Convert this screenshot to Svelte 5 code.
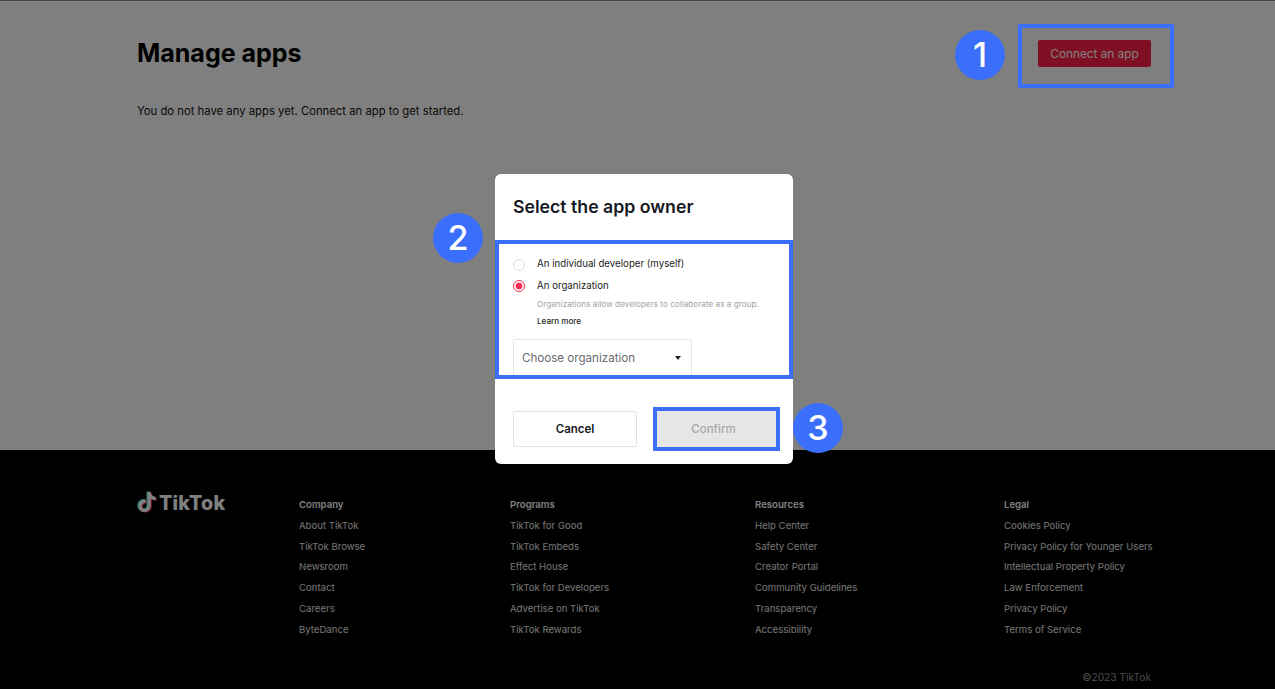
<script>
  const note = "M12.525.02c1.31-.02 2.61-.01 3.91-.02.08 1.53.63 3.09 1.75 4.17 1.12 1.11 2.7 1.62 4.24 1.79v4.03c-1.44-.05-2.89-.35-4.2-.97-.57-.26-1.1-.59-1.62-.93-.01 2.92.01 5.84-.02 8.75-.08 1.4-.54 2.79-1.35 3.94-1.31 1.92-3.58 3.17-5.91 3.21-1.43.08-2.86-.31-4.08-1.03-2.02-1.19-3.44-3.37-3.65-5.71-.02-.5-.03-1-.01-1.49.18-1.9 1.12-3.72 2.58-4.96 1.66-1.44 3.98-2.13 6.15-1.72.02 1.48-.04 2.96-.04 4.44-.99-.32-2.15-.23-3.02.37-.63.41-1.11 1.04-1.36 1.75-.21.51-.15 1.07-.14 1.61.24 1.64 1.82 3.02 3.5 2.87 1.12-.01 2.19-.66 2.77-1.61.19-.33.4-.67.41-1.06.1-1.79.06-3.57.07-5.36.01-4.03-.01-8.05.02-12.07z";

  const columns = [
    { title: "Company", links: ["About TikTok", "TikTok Browse", "Newsroom", "Contact", "Careers", "ByteDance"] },
    { title: "Programs", links: ["TikTok for Good", "TikTok Embeds", "Effect House", "TikTok for Developers", "Advertise on TikTok", "TikTok Rewards"] },
    { title: "Resources", links: ["Help Center", "Safety Center", "Creator Portal", "Community Guidelines", "Transparency", "Accessibility"] },
    { title: "Legal", links: ["Cookies Policy", "Privacy Policy for Younger Users", "Intellectual Property Policy", "Law Enforcement", "Privacy Policy", "Terms of Service"] }
  ];

  let owner = "org";
</script>

<div class="page">
  <main class="main">
    <header class="head">
      <h1>Manage apps</h1>
      <button class="connect">Connect an app</button>
    </header>
    <p class="empty">You do not have any apps yet. Connect an app to get started.</p>
  </main>

  <footer class="footer">
    <div class="cols">
      <div class="logo">
        <svg width="20" height="22" viewBox="0 0 24 24" aria-hidden="true">
          <path d={note} fill="#25f4ee" transform="translate(-1.2 -0.6)" />
          <path d={note} fill="#fe2c55" transform="translate(1.2 0.6)" />
          <path d={note} fill="#fff" />
        </svg>
        <span>TikTok</span>
      </div>
      {#each columns as col}
        <div class="col">
          <h4>{col.title}</h4>
          {#each col.links as link}
            <div class="link">{link}</div>
          {/each}
        </div>
      {/each}
    </div>
    <div class="copy">©2023 TikTok</div>
  </footer>

  <div class="scrim"></div>

  <div class="modal">
    <h2>Select the app owner</h2>
    <div class="body">
      <label class="radio">
        <input type="radio" bind:group={owner} value="me" />
        <span>An individual developer (myself)</span>
      </label>
      <label class="radio second">
        <input type="radio" bind:group={owner} value="org" />
        <span>An organization</span>
      </label>
      <div class="hint">Organizations allow developers to collaborate as a group.</div>
      <div class="more">Learn more</div>
      <div class="select">
        <span>Choose organization</span>
        <i class="caret"></i>
      </div>
    </div>
    <div class="actions">
      <button class="cancel">Cancel</button>
      <button class="confirm" disabled>Confirm</button>
    </div>
  </div>

  <div class="mark box1"></div>
  <div class="mark box2"></div>
  <div class="mark box3"></div>
  <div class="num n1">1</div>
  <div class="num n2">2</div>
  <div class="num n3">3</div>
</div>

<style>
  :global(body) {
    margin: 0;
    font-family: Inter, "Liberation Sans", sans-serif;
  }

  .page {
    position: relative;
    width: 1275px;
    height: 689px;
    overflow: hidden;
    background: #fff;
    border-top: 1px solid #444;
    box-sizing: border-box;
  }

  .main {
    height: 449px;
    padding: 0 124px 0 137px;
    box-sizing: border-box;
  }

  .head {
    display: flex;
    justify-content: space-between;
    align-items: center;
    padding-top: 36px;
    height: 35px;
    box-sizing: content-box;
  }

  h1 {
    margin: -4px 0 0;
    font-size: 25px;
    font-weight: 700;
    color: #000;
  }

  .connect {
    width: 113px;
    height: 27px;
    padding: 0;
    border: 0;
    border-radius: 2px;
    background: #fe2046;
    color: #fff;
    font: 400 11.8px Inter, sans-serif;
    margin-top: -2px;
  }

  .empty {
    margin: 31px 0 0;
    font-size: 11.3px;
    line-height: 16px;
    color: #111;
  }

  .footer {
    height: 239px;
    background: #000;
    padding: 46px 0 0 137px;
    box-sizing: border-box;
    color: #fff;
  }

  .cols {
    display: grid;
    grid-template-columns: 162px 211px 245px 249px 160px;
  }

  .logo {
    display: flex;
    align-items: center;
    gap: 2px;
    height: 22px;
    margin-top: -5px;
  }

  .logo span {
    font-size: 19.7px;
    font-weight: 800;
    letter-spacing: 0.2px;
    line-height: 22px;
    padding-top: 1px;
  }

  .col h4 {
    margin: 0;
    font-size: 9.6px;
    font-weight: 600;
    line-height: 18px;
    color: #fff;
  }

  .link {
    margin-top: 2.8px;
    font-size: 9.6px;
    line-height: 18px;
    color: #e8e8e8;
    white-space: nowrap;
  }

  .copy {
    margin: 30px 124px 0 0;
    text-align: right;
    font-size: 10.2px;
    line-height: 16px;
    color: #999;
  }

  .scrim {
    position: absolute;
    inset: -1px 0 0 0;
    background: rgba(0, 0, 0, 0.5);
  }

  .modal {
    position: absolute;
    left: 495px;
    top: 173px;
    width: 298px;
    height: 290px;
    background: #fff;
    border-radius: 6px;
    box-sizing: border-box;
  }

  h2 {
    margin: 0;
    padding: 22px 18px 0;
    font-size: 17.7px;
    line-height: 21px;
    font-weight: 600;
    color: #161823;
  }

  .body {
    padding: 39px 18px 0;
    box-sizing: border-box;
  }

  .radio {
    display: flex;
    align-items: center;
    gap: 12px;
    height: 16px;
    font-size: 9.7px;
    color: #222;
  }

  .radio span {
    position: relative;
    top: -1px;
  }

  .radio.second {
    margin-top: 5px;
  }

  .radio.second span {
    top: 0;
  }

  .radio input {
    appearance: none;
    margin: 0;
    width: 12px;
    height: 12px;
    border: 1px solid #ddd;
    border-radius: 50%;
    box-sizing: border-box;
    background: #fff;
    position: relative;
    top: 1px;
  }

  .radio input:checked {
    border: 1.5px solid #fe2c55;
    background: radial-gradient(circle, #fe2c55 0 3.2px, #fff 3.7px);
  }

  .hint {
    margin: 4px 0 0 24px;
    font-size: 8.2px;
    line-height: 14px;
    color: #a3a3a8;
    white-space: nowrap;
  }

  .more {
    margin: 3px 0 0 24px;
    font-size: 8.1px;
    font-weight: 500;
    line-height: 14px;
    color: #222;
  }

  .select {
    display: flex;
    align-items: center;
    justify-content: space-between;
    width: 179px;
    height: 38px;
    margin-top: 11px;
    padding: 0 10px 1px 8px;
    box-sizing: border-box;
    border: 1px solid #e6e6e6;
    border-radius: 2px;
    font-size: 11.6px;
    color: #6a6a6f;
  }

  .caret {
    width: 0;
    height: 0;
    border: 3px solid transparent;
    border-top: 4px solid #222;
    border-bottom: 0;
  }

  .actions {
    display: flex;
    justify-content: space-between;
    padding: 0 17px 0 18px;
    margin-top: 34px;
  }

  .actions button {
    height: 36px;
    padding: 0;
    font: 600 11.5px Inter, sans-serif;
    border-radius: 2px;
  }

  .cancel {
    width: 124px;
    background: #fff;
    border: 1px solid #e3e3e3;
    color: #161823;
  }

  .actions .confirm {
    width: 119px;
    padding-right: 6px;
    background: #e6e6e6;
    border: 0;
    color: #a8a8a8;
    font-weight: 500;
  }

  .mark {
    position: absolute;
    border: 4px solid #3b6ffb;
    box-sizing: border-box;
  }

  .box1 { left: 1018px; top: 23px; width: 156px; height: 64px; }
  .box2 { left: 495px; top: 239px; width: 298px; height: 139px; }
  .box3 { left: 653px; top: 406px; width: 127px; height: 44px; }

  .num {
    position: absolute;
    width: 50px;
    height: 50px;
    border-radius: 50%;
    background: #3b6ffb;
    color: #fff;
    font-size: 34px;
    font-weight: 500;
    line-height: 50px;
    text-align: center;
  }

  .n1 { left: 955px; top: 29px; }
  .n2 { left: 433px; top: 212px; }
  .n3 { left: 793px; top: 402px; }
</style>
